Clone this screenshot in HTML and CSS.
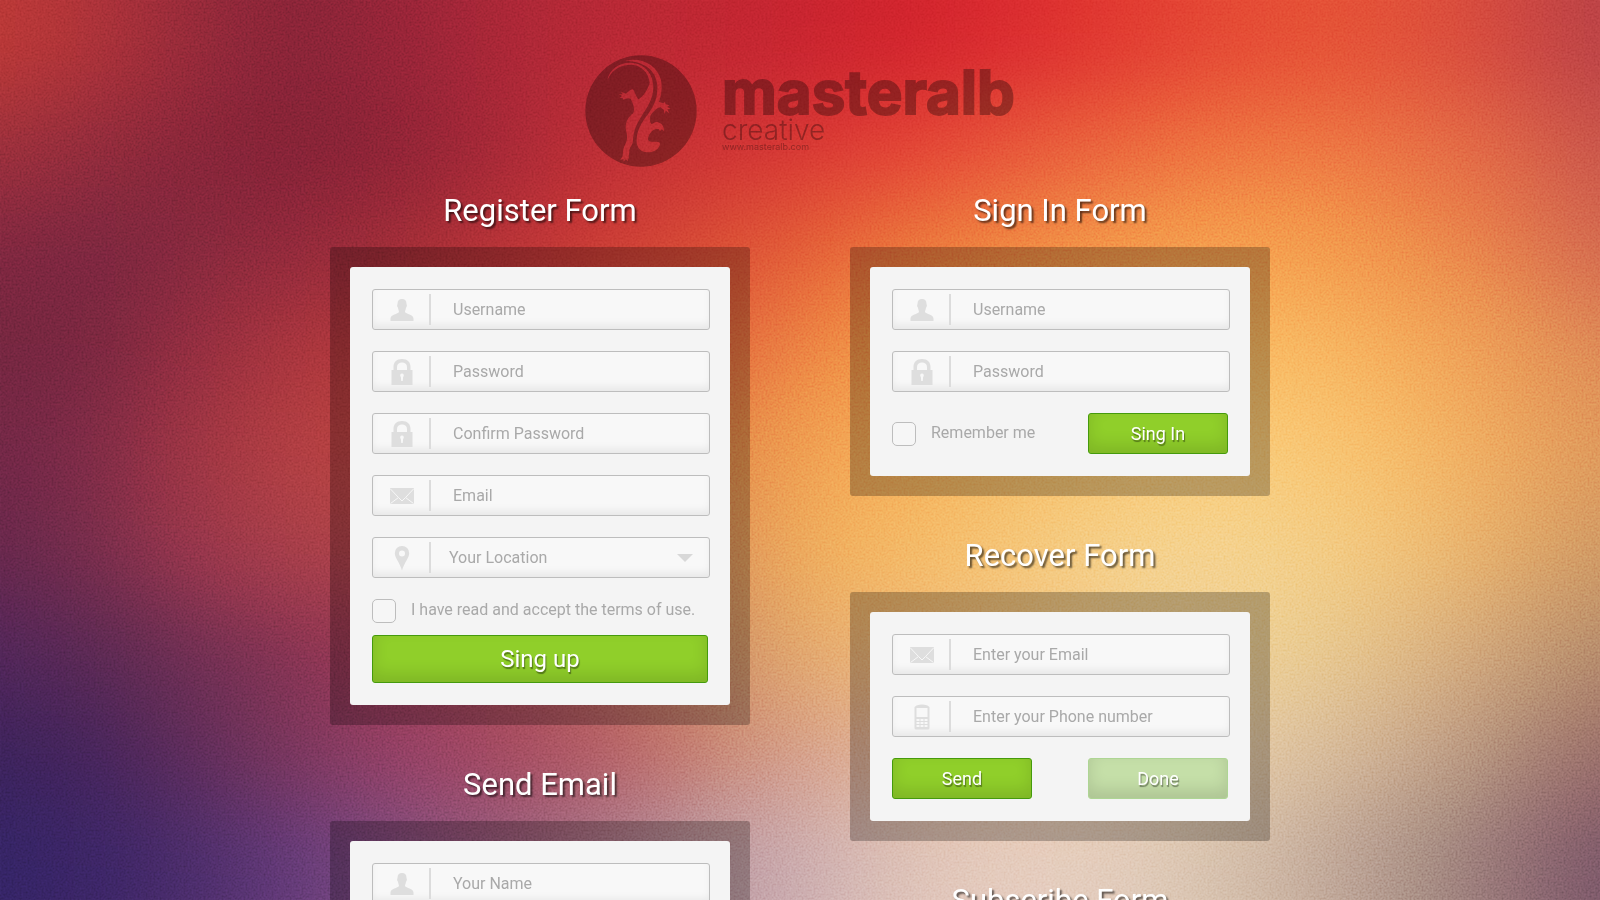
FILE: index.html
```html
<!DOCTYPE html>
<html lang="en">
<head>
<meta charset="utf-8">
<title>Masteralb Creative Forms</title>
<link rel="stylesheet" href="styles.css">
</head>
<body>
<div class="backdrop" aria-hidden="true">
  <div class="backdrop-colors">
    <div class="band band-1"></div>
    <div class="band band-2"></div>
    <div class="band band-3"></div>
    <div class="band band-4"></div>
    <div class="band band-5"></div>
    <div class="band band-6"></div>
    <div class="band band-7"></div>
    <div class="band band-8"></div>
    <div class="band band-9"></div>
  </div>
  <svg class="grain">
    <filter id="grain-filter" x="0" y="0" width="100%" height="100%">
      <feTurbulence type="fractalNoise" baseFrequency="0.5" numOctaves="2" seed="4"/>
      <feColorMatrix values="1 0 0 0 0  1 0 0 0 0  1 0 0 0 0  0 0 0 0 1"/>
    </filter>
    <rect width="100%" height="100%" filter="url(#grain-filter)"/>
  </svg>
</div>

<svg class="symbols" aria-hidden="true">
  <symbol id="icon-user" viewBox="0 0 26 26"><path d="M8.500 7C8.500 3.500 10 2 13 2s4.500 1.500 4.500 5c.7 1 .3 3-.4 3.600-.2 2-1.100 3-1.100 4.400 1 2 8.500 2.500 8.500 6.500V24h-23v-2.500C1.500 17.500 9 17 10 15c0-1.400-.9-2.400-1.100-4.400C8.200 10 7.800 8 8.500 7z"/></symbol>
  <symbol id="icon-lock" viewBox="0 0 26 26"><path fill-rule="evenodd" d="M4.500 11V8c0-5 3-8 8.500-8s8.500 3 8.500 8v3H23.500v15h-21V11zM8 11h10V8c0-3-2-4.500-5-4.500S8 5 8 8zM13 14.500a1.900 1.900 0 0 0-1.100 3.400l.3 4.100h1.600l.3-4.100A1.900 1.900 0 0 0 13 14.500z"/></symbol>
  <symbol id="icon-mail" viewBox="0 0 26 26"><path d="M1 5h24v16H1z"/><path class="icon-line" d="M1 5.500l8.500 9L13 18l3.500-3.500 8.500-9M1.500 20.500l8-6M24.500 20.500l-8-6"/></symbol>
  <symbol id="icon-pin" viewBox="0 0 26 26"><path fill-rule="evenodd" d="M13 1a7 7 0 0 1 7.200 7.200C20.200 13 15.500 17 13 25.500 10.500 17 5.800 13 5.800 8.200A7 7 0 0 1 13 1zm0 4.500a3 3 0 1 0 0 6 3 3 0 0 0 0-6z"/></symbol>
  <symbol id="icon-phone" viewBox="0 0 26 26"><path fill-rule="evenodd" d="M7.500 1.500Q13-.5 18.500 1.500L20.500 3v21q0 1.500-1.500 1.500H7q-1.500 0-1.500-1.500V3zM7.500 4v9h11V4zM7.500 15v2h3v-2zm4 0v2h3v-2zm4 0v2h3v-2zm-8 3v2h3v-2zm4 0v2h3v-2zm4 0v2h3v-2zm-8 3v2h3v-2zm4 0v2h3v-2zm4 0v2h3v-2z"/></symbol>
</svg>

<div class="page">
  <header class="brand">
    <svg class="brand-mark" viewBox="45 29 336 336" aria-hidden="true">
      <mask id="lizard">
        <rect x="45" y="29" width="336" height="336" fill="#fff"/>
        <path d="M112 103C120 68 155 48 190 53C228 58 250 90 250 125C250 165 228 190 210 220C196 243 190 262 189 285C189 300 178 305 178 318C178 328 174 333 178 340L173 339L174 348L167 342L161 349L160 341L151 344L158 332C158 318 160 305 168 292C173 280 172 270 168 255C164 235 172 217 190 203C196 190 188 172 182 161C174 156 168 160 160 163L158 158L148 158L156 152L146 146L158 147L153 139L168 145C174 142 178 133 188 132C196 140 197 155 206 162C222 150 234 132 239 112C236 80 212 60 185 58C150 58 128 72 112 103Z"/>
        <path d="M165 46C215 34 262 58 273 105C278 135 272 155 267 170L280 174L285 170L287 177L298 180L292 185L302 191L292 192L298 204L287 196L284 207L281 193L272 186C260 187 253 197 246 204C238 213 238 225 244 236C250 235 254 228 262 230C275 233 282 242 282 257L275 252L270 258L266 251L258 251C246 253 235 268 234 283C242 296 257 284 270 293C270 312 250 322 230 321C208 318 198 303 200 280C202 255 215 230 232 210C250 185 264 160 262 120C258 75 225 48 165 46Z"/>
      </mask>
      <circle cx="213" cy="197" r="167" mask="url(#lizard)"/>
    </svg>
    <div class="brand-text">
      <div class="brand-name">masteralb</div>
      <div class="brand-tag">creative</div>
      <div class="brand-url">www.masteralb.com</div>
    </div>
  </header>

  <main class="columns">
    <div class="column">
      <section class="block">
        <h2 class="title">Register Form</h2>
        <div class="panel">
          <form class="card">
            <label class="field"><svg class="icon"><use href="#icon-user"/></svg><input class="input" type="text" placeholder="Username" aria-label="Username"></label>
            <label class="field"><svg class="icon"><use href="#icon-lock"/></svg><input class="input" type="password" placeholder="Password" aria-label="Password"></label>
            <label class="field"><svg class="icon"><use href="#icon-lock"/></svg><input class="input" type="password" placeholder="Confirm Password" aria-label="Confirm Password"></label>
            <label class="field"><svg class="icon"><use href="#icon-mail"/></svg><input class="input" type="email" placeholder="Email" aria-label="Email"></label>
            <label class="field"><svg class="icon"><use href="#icon-pin"/></svg><select class="input select" aria-label="Your Location"><option>Your Location</option></select><svg class="arrow" viewBox="0 0 16 8"><path d="M0 0h16L8 8z"/></svg></label>
            <div class="consent">
              <label class="check"><input class="box" type="checkbox"><span class="check-text">I have read and accept the terms of use.</span></label>
              <button class="button button-large" type="button">Sing up</button>
            </div>
          </form>
        </div>
      </section>
      <section class="block">
        <h2 class="title">Send Email</h2>
        <div class="panel">
          <form class="card">
            <label class="field"><svg class="icon"><use href="#icon-user"/></svg><input class="input" type="text" placeholder="Your Name" aria-label="Your Name"></label>
          </form>
        </div>
      </section>
    </div>

    <div class="column">
      <section class="block">
        <h2 class="title">Sign In Form</h2>
        <div class="panel">
          <form class="card">
            <label class="field"><svg class="icon"><use href="#icon-user"/></svg><input class="input" type="text" placeholder="Username" aria-label="Username"></label>
            <label class="field"><svg class="icon"><use href="#icon-lock"/></svg><input class="input" type="password" placeholder="Password" aria-label="Password"></label>
            <div class="actions">
              <label class="check"><input class="box" type="checkbox"><span class="check-text">Remember me</span></label>
              <button class="button" type="button">Sing In</button>
            </div>
          </form>
        </div>
      </section>
      <section class="block">
        <h2 class="title">Recover Form</h2>
        <div class="panel">
          <form class="card">
            <label class="field"><svg class="icon"><use href="#icon-mail"/></svg><input class="input" type="email" placeholder="Enter your Email" aria-label="Enter your Email"></label>
            <label class="field"><svg class="icon"><use href="#icon-phone"/></svg><input class="input" type="tel" placeholder="Enter your Phone number" aria-label="Enter your Phone number"></label>
            <div class="actions">
              <button class="button" type="button">Send</button>
              <button class="button button-done" type="button" disabled>Done</button>
            </div>
          </form>
        </div>
      </section>
      <section class="block">
        <h2 class="title">Subscribe Form</h2>
      </section>
    </div>
  </main>
</div>
</body>
</html>
```
FILE: styles.css
```css
* { box-sizing: border-box; }

body {
  margin: 0;
  font-family: Roboto, "Open Sans", sans-serif;
  color: #a9a9a9;
}

.backdrop {
  position: fixed;
  inset: 0;
  z-index: -1;
  overflow: hidden;
}

.backdrop-colors {
  position: absolute;
  top: -11.11vh;
  bottom: -11.11vh;
  left: -6.25vw;
  right: -6.25vw;
  display: flex;
  flex-direction: column;
  filter: blur(42px);
}

.band { flex: 1; }
.band-1, .band-9 { flex: 2; }

.band-1 { background: linear-gradient(90deg, #b23230 5.56%, #a02c32, #822433, #761f30, #862032, #9e2230, #ac242f, #b5222c, #c0202a, #ca1f27, #d4252a, #dc302a, #e03e2e, #e2472f, #de4832, #cc4038, #ae3a3e 94.44%); }
.band-2 { background: linear-gradient(90deg, #8c2a34 5.56%, #7e2634, #762032, #741d2f, #7b1f30, #982330, #b4282f, #c42c2e, #d2302e, #e03a2f, #e44a33, #e85a36, #ec6638, #ed6a3a, #e8653c, #dc5a3e, #c04a42 94.44%); }
.band-3 { background: linear-gradient(90deg, #702238 5.56%, #6c2238, #762436, #802434, #902730, #ae2c30, #c4342f, #d2422f, #e05230, #e86834, #ee7638, #f28540, #f48f44, #f49044, #ee8042, #e47042, #cc5c46 94.44%); }
.band-4 { background: linear-gradient(90deg, #662238 5.56%, #6a2238, #842838, #a03036, #a83232, #b43832, #c84632, #dc5a34, #ec743c, #f0883e, #f29444, #f4a04c, #f8ae54, #f8b058, #f4a050, #ea8c4c, #d8784c 94.44%); }
.band-5 { background: linear-gradient(90deg, #64223e 5.56%, #70263e, #92303a, #aa383a, #ac3c38, #b84838, #c85a3a, #dc743e, #f09048, #f3a24e, #f5b058, #f7bc62, #f9c66c, #f8c068, #f6b25c, #ec9c54, #da8850 94.44%); }
.band-6 { background: linear-gradient(90deg, #5a2242 5.56%, #6a2842, #8a3042, #9c3840, #a43c40, #b04a42, #c06048, #d47c50, #eea050, #f4ae58, #f4bc68, #f4c878, #f4cd80, #f3c878, #f0ba6a, #e2a05c, #c88858 94.44%); }
.band-7 { background: linear-gradient(90deg, #482250 5.56%, #502448, #642a48, #762c48, #8c3448, #9c4450, #b05a50, #c07858, #e09c60, #ecac68, #f0b870, #f0c47c, #eecb88, #e8c680, #dcb076, #c6946a, #a8785e 94.44%); }
.band-8 { background: linear-gradient(90deg, #341e50 5.56%, #3e2050, #55284e, #6e3050, #84385a, #963e52, #a85058, #be6f62, #d09078, #dca884, #e6bc90, #eac49a, #e4c69c, #d8b890, #c4a07e, #a67c6c, #88605c 94.44%); }
.band-9 { background: linear-gradient(90deg, #2e205a 5.56%, #34205a, #43285e, #5a346c, #70446e, #84506c, #9a6878, #b08690, #c4a0a4, #d8b8ac, #e2c4b4, #e0c6b4, #d4bca4, #c0a490, #a28478, #846668, #6c4c5c 94.44%); }

.grain {
  position: absolute;
  width: 100%;
  height: 100%;
  mix-blend-mode: overlay;
  opacity: 0.3;
}

.symbols {
  position: absolute;
  width: 0;
  height: 0;
}

.page {
  height: 100vh;
  overflow-x: hidden;
  overflow-y: auto;
  scrollbar-width: none;
}

.brand {
  display: flex;
  justify-content: center;
  gap: 25px;
  padding-top: 55px;
  color: #1c0606;
  fill: #1c0606;
  font-family: Inter, sans-serif;
  opacity: 0.36;
}

.brand-mark {
  width: 112px;
  height: 112px;
}

.brand-text { padding-top: 9px; }

.brand-name {
  font-weight: 700;
  font-size: 60px;
  line-height: 56px;
  -webkit-text-stroke: 2px #1c0606;
}

.brand-tag {
  font-weight: 300;
  font-size: 28px;
  line-height: 20px;
}

.brand-url {
  font-size: 9px;
  line-height: 14px;
}

.columns {
  display: flex;
  justify-content: center;
  gap: 100px;
  padding: 24px 20px 0;
}

.column {
  flex: 0 1 420px;
  display: flex;
  flex-direction: column;
  gap: 40px;
}

.title {
  margin: 0 0 16px;
  font-weight: 400;
  font-size: 31px;
  line-height: 40px;
  text-align: center;
  color: #fff;
  text-shadow: 2px 2px 2px rgba(0, 0, 0, 0.6);
}

.panel {
  padding: 20px;
  border-radius: 3px;
  background: rgba(0, 0, 0, 0.25);
}

.card {
  display: flex;
  flex-direction: column;
  gap: 21px;
  padding: 22px 20px 22px 22px;
  border-radius: 3px;
  background: #f4f4f4;
}

.field {
  display: flex;
  align-items: center;
  height: 41px;
  padding: 0 14px 0 16px;
  border: 1px solid #bdbdbd;
  border-radius: 3px;
  background: #f8f8f8;
  box-shadow: inset 0 -6px 8px -2px rgba(0, 0, 0, 0.07);
}

.icon {
  flex: none;
  width: 26px;
  height: 26px;
  margin-right: 14px;
  fill: #dedede;
}

.icon-line {
  fill: none;
  stroke: #f8f8f8;
  stroke-width: 1;
}

.input {
  flex: 1;
  min-width: 0;
  height: 31px;
  padding: 0 0 0 22px;
  border: 0;
  border-left: 2px solid #dcdcdc;
  outline: 0;
  background: none;
  color: #a9a9a9;
  font-family: inherit;
  font-size: 16px;
}

.input::placeholder { color: #a9a9a9; }

.select {
  appearance: none;
  padding-left: 18px;
}

.arrow {
  flex: none;
  width: 16px;
  height: 8px;
  margin-right: 2px;
  fill: #d8d8d8;
}

.consent {
  display: flex;
  flex-direction: column;
  gap: 12px;
  padding-right: 2px;
}

.actions {
  display: flex;
  align-items: center;
  justify-content: space-between;
  padding-right: 2px;
}

.check {
  display: flex;
  gap: 15px;
  font-size: 16px;
  line-height: 22px;
}

.box {
  appearance: none;
  flex: none;
  width: 24px;
  height: 24px;
  margin: 0;
  border: 1px solid #bdbdbd;
  border-radius: 5px;
  background: #f6f6f6;
}

.button {
  width: 140px;
  height: 41px;
  padding: 0;
  border: 1px solid #459a0c;
  border-radius: 3px;
  background: #90cf2a;
  box-shadow: inset 0 -8px 16px rgba(0, 0, 0, 0.12);
  color: #fff;
  font-family: inherit;
  font-size: 18px;
  text-shadow: 1px 2px 1px rgba(0, 0, 0, 0.4);
}

.button-large {
  width: 100%;
  height: 48px;
  font-size: 24px;
}

.button-done {
  border-color: #aed594;
  background: #c5dfa8;
}
```
